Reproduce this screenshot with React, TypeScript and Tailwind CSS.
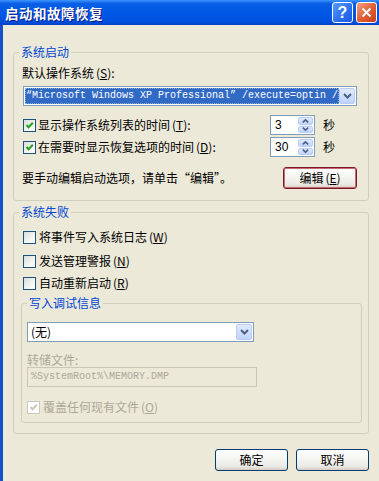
import React from 'react';

const FONT = "font-['Noto_Sans_CJK_SC','Noto_Sans',sans-serif]";

function CheckBox({ checked, disabled }: { checked?: boolean; disabled?: boolean }) {
    return (
        <span
            className={`flex h-[13px] w-[13px] shrink-0 items-center justify-center border ${
                disabled
                    ? 'border-[#CAC8BB] bg-white'
                    : 'border-[#1C5180] bg-[linear-gradient(135deg,#dcdcd7_0%,#f3f3ef_55%,#ffffff_100%)]'
            }`}
        >
            {checked && (
                <svg width="9" height="9" viewBox="0 0 9 9">
                    <path d="M1.5 4 L3.6 6.3 L7.8 1.8" fill="none" stroke={disabled ? '#CAC8BB' : '#21A121'} strokeWidth="2" />
                </svg>
            )}
        </span>
    );
}

function DropButton() {
    return (
        <span className="flex h-[16px] w-[16px] shrink-0 items-center justify-center rounded-[2px] border border-[#B9CCF5] bg-[linear-gradient(to_bottom,#e0eafe,#c0d3fb)]">
            <svg width="9" height="6" viewBox="0 0 9 6">
                <path d="M1 1 L4.5 4.5 L8 1" fill="none" stroke="#4D6185" strokeWidth="2" />
            </svg>
        </span>
    );
}

function Spinner({ value }: { value: string }) {
    return (
        <div className="flex h-[20px] w-[45px] items-center border border-[#7F9DB9] bg-white p-px">
            <span className="flex-1 pl-[3px] font-['Liberation_Sans',sans-serif] text-[12px] leading-none">{value}</span>
            <div className="flex h-full w-[15px] flex-col gap-px">
                <span className="flex flex-1 items-center justify-center rounded-[2px] border border-[#B9CCF5] bg-[linear-gradient(to_bottom,#e0eafe,#c0d3fb)]">
                    <svg width="7" height="4" viewBox="0 0 7 4">
                        <path d="M0.8 3.4 L3.5 0.8 L6.2 3.4" fill="none" stroke="#4D6185" strokeWidth="1.6" />
                    </svg>
                </span>
                <span className="flex flex-1 items-center justify-center rounded-[2px] border border-[#B9CCF5] bg-[linear-gradient(to_bottom,#e0eafe,#c0d3fb)]">
                    <svg width="7" height="4" viewBox="0 0 7 4">
                        <path d="M0.8 0.6 L3.5 3.2 L6.2 0.6" fill="none" stroke="#4D6185" strokeWidth="1.6" />
                    </svg>
                </span>
            </div>
        </div>
    );
}

function XpButton({ children, hot, className = '' }: { children: React.ReactNode; hot?: boolean; className?: string }) {
    return (
        <button
            className={`flex h-[22px] items-center justify-center rounded-[3px] border text-[12px] leading-none text-black bg-[linear-gradient(to_bottom,#ffffff_0%,#f4f4f0_45%,#ecebe6_80%,#d6d0c5_100%)] ${
                hot ? 'border-[#7A1A28] shadow-[inset_0_0_0_1px_#c46873]' : 'border-[#003C74] shadow-[inset_0_-1px_0_#d6d0c5]'
            } ${className}`}
        >
            {children}
        </button>
    );
}

function Mn({ k }: { k: string }) {
    return (
        <span className="ml-[2px]">
            (<span className="underline underline-offset-[1px]">{k}</span>)
        </span>
    );
}

function GroupLabel({ children }: { children: React.ReactNode }) {
    return <div className="-mt-[8px] ml-[5px] w-fit bg-[#ECE9D8] px-[2px] leading-[14px] text-[#0046D5]">{children}</div>;
}

export default function App() {
    return (
        <div className={`flex h-[481px] w-[379px] flex-col overflow-hidden bg-[#ECE9D8] text-[12px] leading-[14px] text-black ${FONT}`}>
            {/* Title bar */}
            <div className="flex h-[25px] shrink-0 items-center justify-between bg-[linear-gradient(to_bottom,#3d95ff_0%,#0a5fe5_14%,#0058e6_50%,#0050de_86%,#0042c8_100%)] pl-[5px] pr-[2px]">
                <span className="text-[13.5px] font-bold tracking-[0.5px] text-white [text-shadow:1px_1px_0_#0a1883]">启动和故障恢复</span>
                <div className="flex gap-[3px]">
                    <span className="flex h-[21px] w-[21px] items-center justify-center rounded-[3px] border border-white bg-[linear-gradient(135deg,#5b9aff,#2a6ef0_60%,#1d5ce0)] text-[16px] font-bold leading-none text-white font-['Liberation_Sans',sans-serif]">
                        ?
                    </span>
                    <span className="flex h-[21px] w-[21px] items-center justify-center rounded-[3px] border border-white bg-[linear-gradient(135deg,#f0a585,#e25a2f_55%,#c8401b)]">
                        <svg width="11" height="11" viewBox="0 0 11 11">
                            <path d="M1.5 1.5 L9.5 9.5 M9.5 1.5 L1.5 9.5" stroke="white" strokeWidth="2" />
                        </svg>
                    </span>
                </div>
            </div>

            {/* Body */}
            <div className="flex flex-1 flex-col border-l-[3px] border-[#1650C8]">
                {/* 系统启动 */}
                <div className="ml-[10px] mt-[27px] h-[149px] w-[356px] rounded-[3px] border border-[#D0D0BF]">
                    <GroupLabel>系统启动</GroupLabel>
                    <div className="ml-[8px] mt-[7px]">
                        默认操作系统<Mn k="S" />:
                    </div>
                    <div className="ml-[9px] mt-[6px] flex h-[20px] w-[334px] items-center border border-[#7F9DB9] bg-white p-px">
                        <div className="flex h-full min-w-0 flex-1 items-center overflow-hidden bg-[#316AC5] outline-1 outline-dotted outline-offset-[-1px] outline-[#8aa8d8]">
                            <span className="whitespace-nowrap pl-[1px] font-['Liberation_Mono',monospace] text-[10px] text-white">
                                “Microsoft Windows XP Professional” /execute=optin /
                            </span>
                        </div>
                        <DropButton />
                    </div>
                    <div className="ml-[9px] mt-[9px] flex h-[20px] items-center">
                        <CheckBox checked />
                        <span className="ml-[2px] w-[232px]">
                            显示操作系统列表的时间<Mn k="T" />:
                        </span>
                        <Spinner value="3" />
                        <span className="ml-[8px]">秒</span>
                    </div>
                    <div className="ml-[9px] mt-[2px] flex h-[20px] items-center">
                        <CheckBox checked />
                        <span className="ml-[2px] w-[232px]">
                            在需要时显示恢复选项的时间<Mn k="D" />:
                        </span>
                        <Spinner value="30" />
                        <span className="ml-[8px]">秒</span>
                    </div>
                    <div className="ml-[8px] mt-[10px] flex h-[22px] items-center">
                        <span className="w-[261px]">要手动编辑启动选项，请单击“编辑”。</span>
                        <XpButton hot className="w-[74px]">
                            编辑<Mn k="E" />
                        </XpButton>
                    </div>
                </div>

                {/* 系统失败 */}
                <div className="ml-[10px] mt-[11px] h-[222px] w-[356px] rounded-[3px] border border-[#D0D0BF]">
                    <GroupLabel>系统失败</GroupLabel>
                    <div className="ml-[9px] mt-[11px] flex h-[14px] items-center">
                        <CheckBox />
                        <span className="ml-[3px]">
                            将事件写入系统日志<Mn k="W" />
                        </span>
                    </div>
                    <div className="ml-[9px] mt-[10px] flex h-[14px] items-center">
                        <CheckBox />
                        <span className="ml-[3px]">
                            发送管理警报<Mn k="N" />
                        </span>
                    </div>
                    <div className="ml-[9px] mt-[8px] flex h-[14px] items-center">
                        <CheckBox />
                        <span className="ml-[3px]">
                            自动重新启动<Mn k="R" />
                        </span>
                    </div>

                    {/* 写入调试信息 */}
                    <div className="ml-[7px] mt-[13px] h-[120px] w-[341px] rounded-[3px] border border-[#D0D0BF]">
                        <GroupLabel>写入调试信息</GroupLabel>
                        <div className="ml-[5px] mt-[12px] flex h-[20px] w-[227px] items-center border border-[#7F9DB9] bg-white p-px">
                            <span className="flex-1 pl-[2px]">(无)</span>
                            <DropButton />
                        </div>
                        <div className="ml-[5px] mt-[12px] leading-[12px] text-[#ACA899]">转储文件:</div>
                        <div className="ml-[5px] mt-px flex h-[20px] w-[230px] items-center border border-[#C9C7BA] pl-[3px]">
                            <span className="font-['Liberation_Mono',monospace] text-[10px] text-[#ACA899]">%SystemRoot%\MEMORY.DMP</span>
                        </div>
                        <div className="ml-[5px] mt-[13px] flex h-[14px] items-center text-[#ACA899]">
                            <CheckBox checked disabled />
                            <span className="ml-[3px]">
                                覆盖任何现有文件<Mn k="O" />
                            </span>
                        </div>
                    </div>
                </div>

                {/* Buttons */}
                <div className="ml-[212px] mt-[15px] flex gap-[8px]">
                    <XpButton className="w-[73px]">确定</XpButton>
                    <XpButton className="w-[73px]">取消</XpButton>
                </div>
            </div>
        </div>
    );
}
